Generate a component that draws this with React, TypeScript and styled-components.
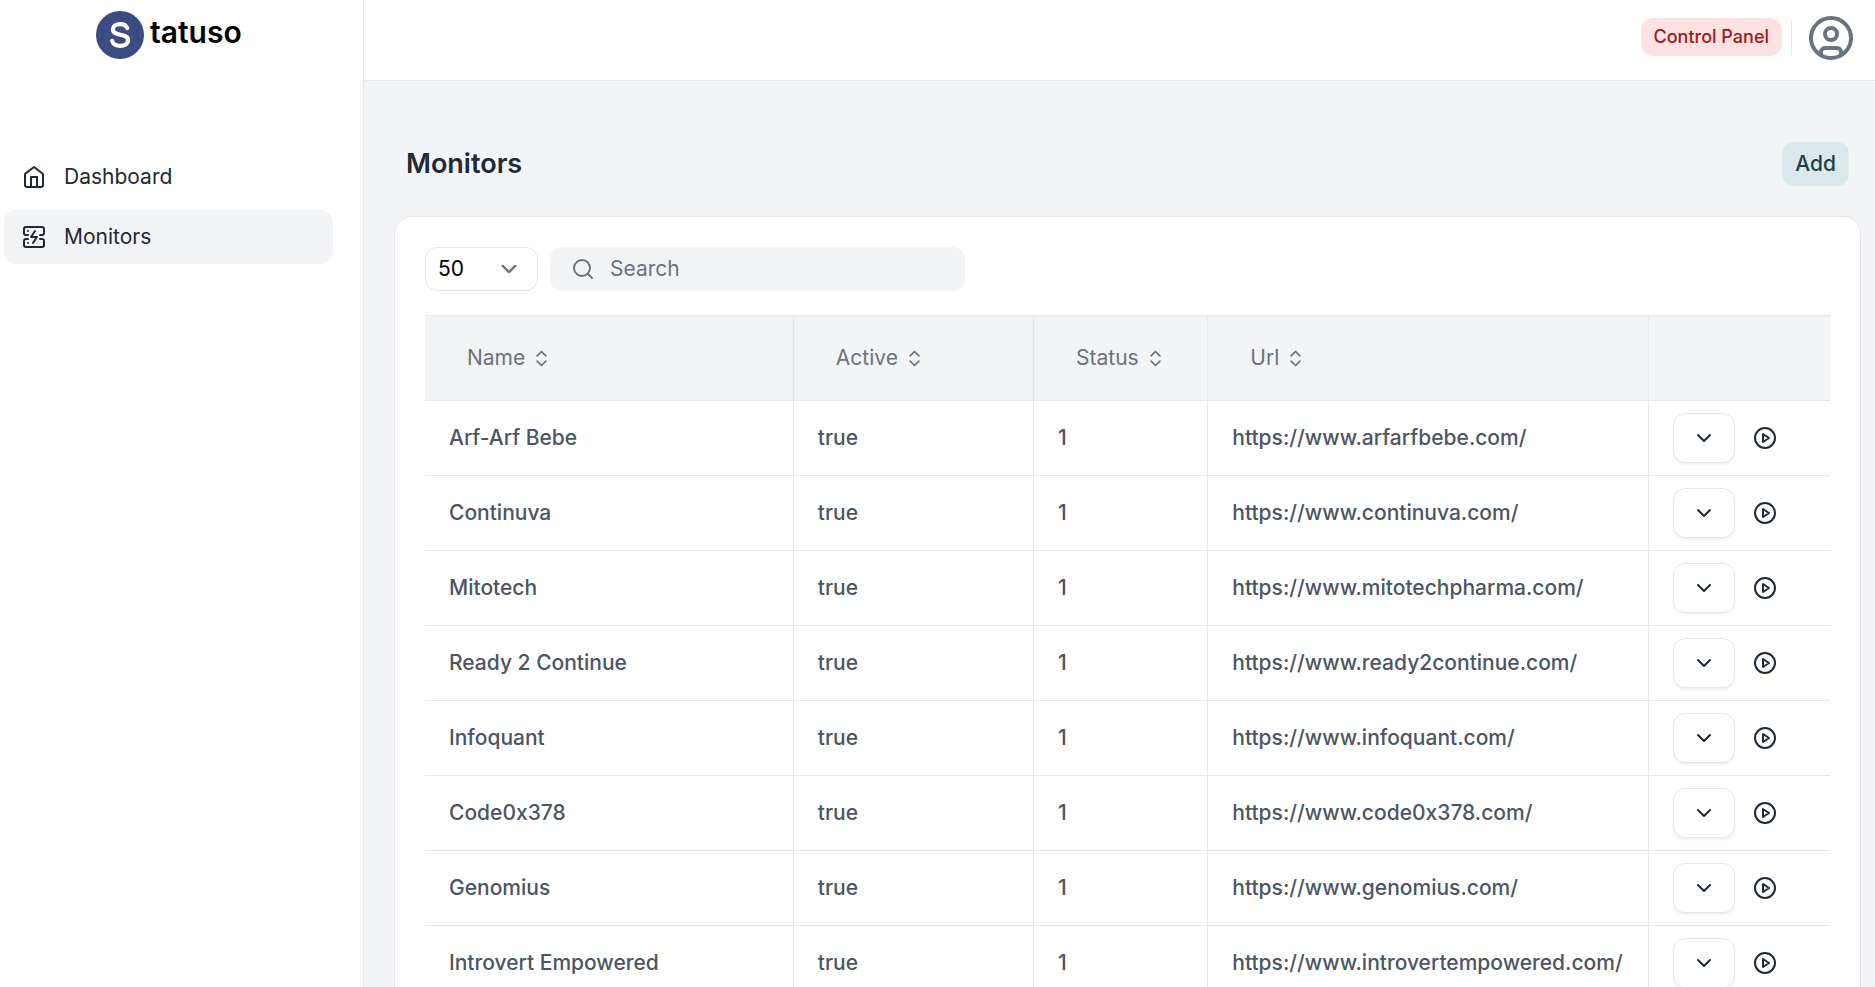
import React from 'react';
import styled, { createGlobalStyle, css } from 'styled-components';

const line = '#e5e7eb';
const mist = '#f3f4f6';
const ink = '#1f2937';

const GlobalStyle = createGlobalStyle`
  *, *::before, *::after { box-sizing: border-box; }
  body { margin: 0; background: ${mist}; }
  body, button, input, select { font-family: Inter, sans-serif; font-size: 21px; line-height: 30px; }
`;

const Shell = styled.div`
  display: grid;
  grid-template-columns: 364px minmax(0, 1fr);
  height: 100vh;
  overflow: hidden;
`;

const Sidebar = styled.aside`
  background: #fff;
  border-right: 1px solid ${line};
  padding: 11px 30px 0 4px;
`;

const Brand = styled.a`
  display: flex;
  gap: 6px;
  align-items: flex-start;
  margin: 0 0 91px 92px;
  color: #000;
  font-size: 30px;
  font-weight: 600;
  line-height: 42px;
  text-decoration: none;
`;

const Nav = styled.nav`
  display: grid;
  gap: 6px;
`;

const NavItem = styled.a<{ $active?: boolean }>`
  display: flex;
  align-items: center;
  gap: 18px;
  height: 54px;
  padding: 0 18px;
  border-radius: 12px;
  color: ${ink};
  text-decoration: none;
  background: ${({ $active }) => ($active ? mist : 'transparent')};
`;

const Main = styled.main`
  min-width: 0;
`;

const TopBar = styled.header`
  display: flex;
  align-items: flex-start;
  justify-content: flex-end;
  height: 81px;
  padding: 14px 20px 0 0;
  background: #fff;
  border-bottom: 1px solid ${line};
`;

const ControlPanel = styled.button`
  height: 38px;
  margin-top: 4px;
  padding: 0 13px;
  border: 0;
  border-radius: 12px;
  background: #fee2e2;
  color: #991b1b;
  font-size: 18px;
  font-weight: 500;
`;

const Divider = styled.span`
  width: 1px;
  height: 36px;
  margin: 5px 15px 0 9px;
  background: ${line};
`;

const Avatar = styled.button`
  display: flex;
  padding: 0;
  border: 0;
  background: none;
  color: #6b7280;
`;

const TitleRow = styled.div`
  display: flex;
  align-items: center;
  justify-content: space-between;
  padding: 61px 26px 30px 42px;
`;

const Title = styled.h1`
  margin: 0;
  color: ${ink};
  font-size: 27px;
  font-weight: 600;
  line-height: 42px;
`;

const AddButton = styled.button`
  height: 44px;
  padding: 0 13px;
  border: 0;
  border-radius: 12px;
  background: #dbe9ed;
  color: #1c3f49;
  font-weight: 500;
`;

const Card = styled.section`
  margin: 0 14px 0 30px;
  padding: 30px;
  background: #fff;
  border: 1px solid ${line};
  border-radius: 18px;
`;

const Tools = styled.div`
  display: flex;
  gap: 12px;
  margin-bottom: 24px;
`;

const SelectWrap = styled.label`
  display: grid;
  align-items: center;
  width: 113px;
  height: 44px;

  > * { grid-area: 1 / 1; }
  > svg { justify-self: end; margin-right: 17px; pointer-events: none; color: #6b7280; }
`;

const PageSize = styled.select`
  appearance: none;
  width: 100%;
  height: 44px;
  padding: 0 12px;
  border: 1px solid ${line};
  border-radius: 12px;
  background: #fff;
  color: #000;
`;

const SearchBox = styled.label`
  display: flex;
  align-items: center;
  gap: 15px;
  width: 415px;
  padding: 0 21px;
  border-radius: 12px;
  background: ${mist};
  color: #6b7280;
`;

const SearchInput = styled.input`
  flex: 1;
  min-width: 0;
  padding: 0;
  border: 0;
  outline: 0;
  background: none;
  color: ${ink};
  &::placeholder { color: #6b7280; opacity: 1; }
`;

const Table = styled.table`
  width: 100%;
  border-spacing: 0;
  border-top: 1px solid ${line};
  table-layout: fixed;
`;

const cell = css`
  border-bottom: 1px solid ${line};
  text-align: left;
  white-space: nowrap;
  &:not(:last-child) { border-right: 1px solid ${line}; }
`;

const Col = styled.col<{ $share: number }>`
  width: ${({ $share }) => $share}%;
`;

const HeadCell = styled.th`
  ${cell}
  height: 85px;
  padding: 0 42px;
  background: ${mist};
`;

const SortButton = styled.button`
  display: flex;
  align-items: center;
  gap: 6px;
  padding: 0;
  border: 0;
  background: none;
  color: #6b7280;
`;

const Cell = styled.td`
  ${cell}
  height: 75px;
  padding: 0 24px;
  color: #4b5563;
  font-weight: 500;
`;

const Actions = styled.div`
  display: flex;
  align-items: center;
  gap: 18px;
`;

const MenuButton = styled.button`
  display: grid;
  place-items: center;
  width: 62px;
  height: 50px;
  padding: 0;
  border: 1px solid ${line};
  border-radius: 12px;
  background: #fff;
  color: ${ink};
  box-shadow: 0 2px 3px rgba(0, 0, 0, 0.05);
`;

const PlayButton = styled.button`
  display: flex;
  padding: 0;
  border: 0;
  background: none;
  color: ${ink};
`;

type IconProps = { size?: number; stroke?: number; children: React.ReactNode };

const Icon = ({ size = 24, stroke = 2, children }: IconProps) => (
  <svg width={size} height={size} viewBox="0 0 24 24" fill="none" stroke="currentColor"
    strokeWidth={stroke} strokeLinecap="round" strokeLinejoin="round" aria-hidden="true">
    {children}
  </svg>
);

const Logo = () => (
  <svg width="48" height="48" viewBox="0 0 48 48" aria-hidden="true">
    <circle cx="24" cy="24" r="24" fill="#3b4c82" />
    <path d="M31.2 17C30.200 14.500 27.600 13.100 24.300 13.100C19.900 13.100 16.900 15.200 16.900 18.500C16.900 25.700 32.100 21.700 32.100 29.100C32.100 32.700 28.700 34.800 24.200 34.800C19.600 34.800 16.600 32.700 16.200 29.800"
      fill="none" stroke="#fff" strokeWidth="4.200" strokeLinecap="round" />
  </svg>
);

const monitors = [
  ['Arf-Arf Bebe', 'arfarfbebe'],
  ['Continuva', 'continuva'],
  ['Mitotech', 'mitotechpharma'],
  ['Ready 2 Continue', 'ready2continue'],
  ['Infoquant', 'infoquant'],
  ['Code0x378', 'code0x378'],
  ['Genomius', 'genomius'],
  ['Introvert Empowered', 'introvertempowered'],
];

export default function App() {
  return (
    <>
      <GlobalStyle />
      <Shell>
        <Sidebar>
          <Brand href="#"><Logo />tatuso</Brand>
          <Nav>
            <NavItem href="#dashboard">
              <Icon>
                <path d="m3 9 9-7 9 7v11a2 2 0 0 1-2 2H5a2 2 0 0 1-2-2z" />
                <path d="M9 22V12h6v10" />
              </Icon>
              Dashboard
            </NavItem>
            <NavItem href="#monitors" $active>
              <Icon>
                <path d="M6 10H4a2 2 0 0 1-2-2V4a2 2 0 0 1 2-2h16a2 2 0 0 1 2 2v4a2 2 0 0 1-2 2h-2" />
                <path d="M6 14H4a2 2 0 0 0-2 2v4a2 2 0 0 0 2 2h16a2 2 0 0 0 2-2v-4a2 2 0 0 0-2-2h-2" />
                <path d="M6 6h.01M6 18h.01m6.990-12-4 6h6l-4 6" />
              </Icon>
              Monitors
            </NavItem>
          </Nav>
        </Sidebar>
        <Main>
          <TopBar>
            <ControlPanel>Control Panel</ControlPanel>
            <Divider />
            <Avatar aria-label="Account">
              <Icon size={48}>
                <circle cx="12" cy="12" r="10" />
                <circle cx="12" cy="10" r="3" />
                <path d="M7 20.662V19a2 2 0 0 1 2-2h6a2 2 0 0 1 2 2v1.662" />
              </Icon>
            </Avatar>
          </TopBar>
          <TitleRow>
            <Title>Monitors</Title>
            <AddButton>Add</AddButton>
          </TitleRow>
          <Card>
            <Tools>
              <SelectWrap>
                <PageSize aria-label="Rows per page" defaultValue="50"><option>50</option></PageSize>
                <Icon stroke={2.4}><path d="m5.700 8.900 6.300 6.200 6.300-6.200" /></Icon>
              </SelectWrap>
              <SearchBox>
                <Icon><circle cx="11" cy="11" r="8" /><path d="m21 21-4.300-4.300" /></Icon>
                <SearchInput type="search" placeholder="Search" aria-label="Search" />
              </SearchBox>
            </Tools>
            <Table>
              <colgroup>
                {[26.25, 17.1, 12.4, 31.35, 12.9].map((share) => <Col key={share} $share={share} />)}
              </colgroup>
              <thead>
                <tr>
                  {['Name', 'Active', 'Status', 'Url'].map((label) => (
                    <HeadCell key={label} scope="col">
                      <SortButton>{label}<Icon size={21}><path d="m7 15 5 5 5-5M7 9l5-5 5 5" /></Icon></SortButton>
                    </HeadCell>
                  ))}
                  <HeadCell scope="col" aria-label="Actions" />
                </tr>
              </thead>
              <tbody>
                {monitors.map(([name, host]) => (
                  <tr key={host}>
                    <Cell>{name}</Cell>
                    <Cell>true</Cell>
                    <Cell>1</Cell>
                    <Cell>{`https://www.${host}.com/`}</Cell>
                    <Cell>
                      <Actions>
                        <MenuButton aria-label={`Options for ${name}`}><Icon><path d="m6 9 6 6 6-6" /></Icon></MenuButton>
                        <PlayButton aria-label={`Run ${name}`}><Icon><circle cx="12" cy="12" r="10" /><path d="m10 8 6 4-6 4V8z" /></Icon></PlayButton>
                      </Actions>
                    </Cell>
                  </tr>
                ))}
              </tbody>
            </Table>
          </Card>
        </Main>
      </Shell>
    </>
  );
}
